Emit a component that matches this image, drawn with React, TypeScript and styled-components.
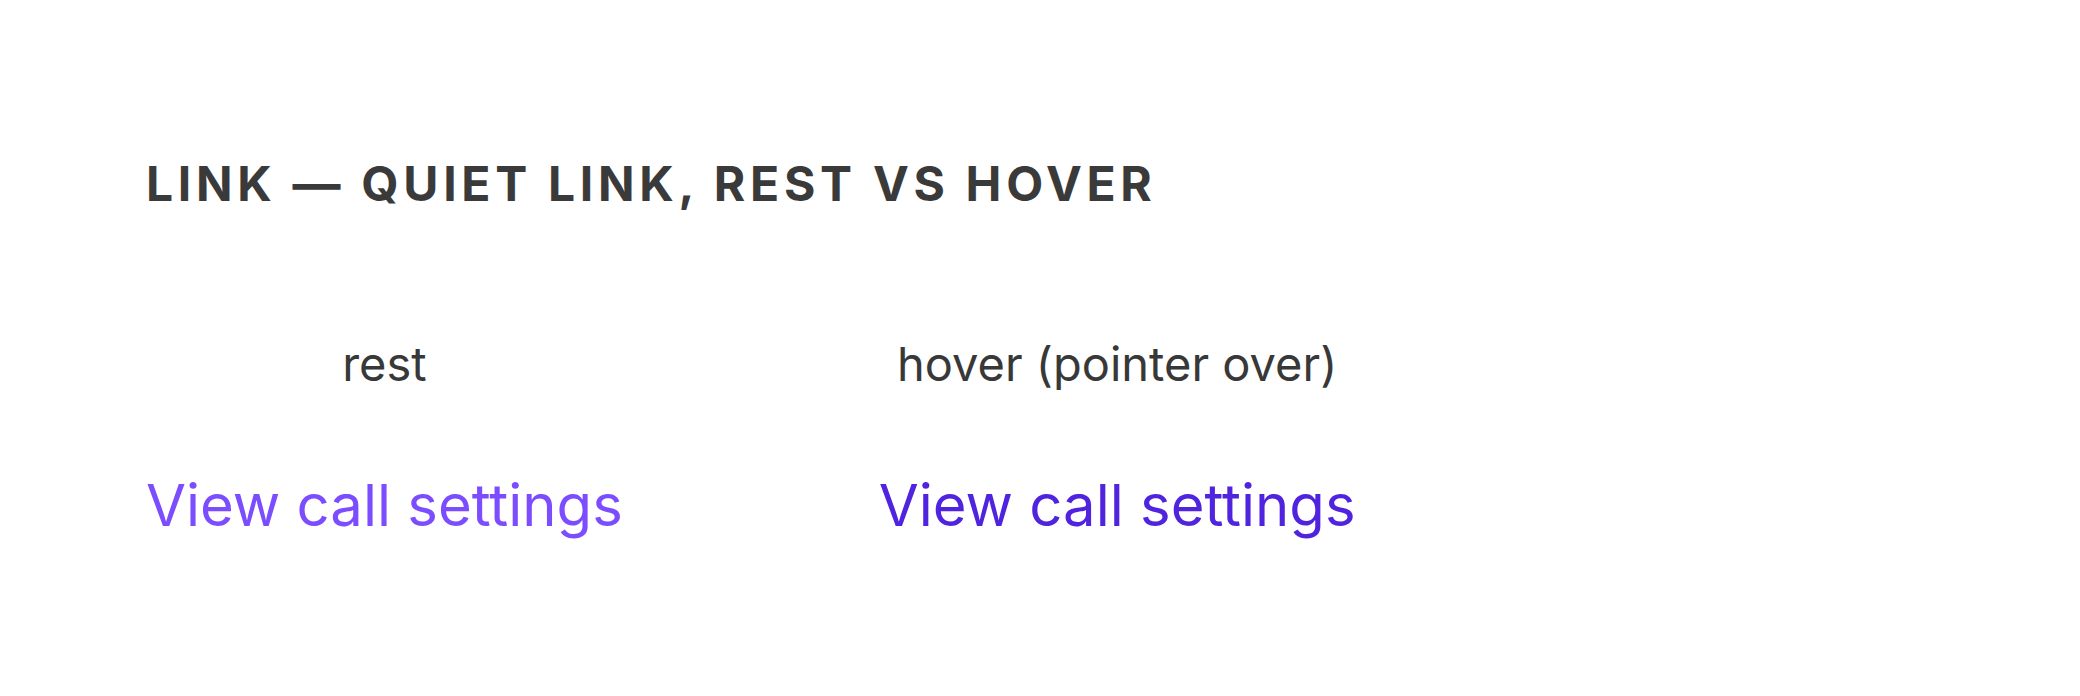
import React from 'react';
import styled, { createGlobalStyle } from 'styled-components';

const GlobalStyle = createGlobalStyle`
  html, body {
    margin: 0;
    padding: 0;
    background: #ffffff;
  }

  body {
    font-family: Inter, "Noto Sans", "Liberation Sans", sans-serif;
    -webkit-font-smoothing: antialiased;
  }
`;

const Page = styled.main`
  padding: 160px 146px 0;
`;

const Title = styled.h2`
  margin: 0;
  font-size: 48px;
  line-height: 1;
  font-weight: 700;
  letter-spacing: 4.7px;
  text-transform: uppercase;
  color: #3a3a3a;
`;

const Compare = styled.div`
  display: flex;
  align-items: flex-start;
  gap: 256px;
  margin-top: 132px;
`;

const Variant = styled.div`
  display: flex;
  flex-direction: column;
  align-items: center;
  gap: 82px;
`;

const Caption = styled.span`
  font-size: 47px;
  line-height: 1;
  color: #383838;
`;

const QuietLink = styled.a<{ $hover?: boolean }>`
  display: inline-block;
  font-size: 58px;
  line-height: 1.25;
  text-decoration: none;
  cursor: pointer;
  color: ${({ $hover }) => ($hover ? '#5024de' : '#7c4dff')};

  &:hover {
    color: #5024de;
  }
`;

const variants = [
  { caption: 'rest', hover: false },
  { caption: 'hover (pointer over)', hover: true },
];

export default function App() {
  return (
    <>
      <GlobalStyle />
      <Page>
        <Title>Link — quiet link, rest vs hover</Title>
        <Compare>
          {variants.map((v) => (
            <Variant key={v.caption}>
              <Caption>{v.caption}</Caption>
              <QuietLink href="#" $hover={v.hover} onClick={(e) => e.preventDefault()}>
                View call settings
              </QuietLink>
            </Variant>
          ))}
        </Compare>
      </Page>
    </>
  );
}
